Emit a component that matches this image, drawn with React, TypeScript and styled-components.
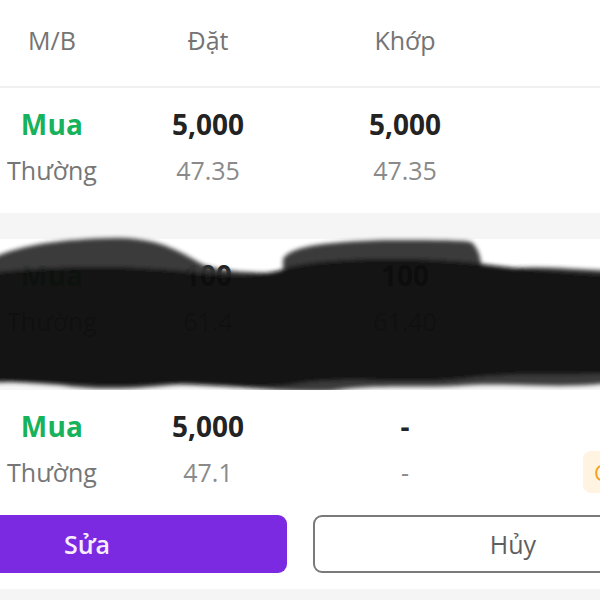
import styled, { createGlobalStyle } from 'styled-components'
import { FC } from 'react'

type TOrder = {
  side: string
  kind: string
  qty: string
  price: string
  matchQty: string
  matchPrice: string
  status?: string
  actions?: boolean
  hidden?: boolean
}

const orders: TOrder[] = [
  { side: 'Mua', kind: 'Thường', qty: '5,000', price: '47.35', matchQty: '5,000', matchPrice: '47.35' },
  { side: 'Mua', kind: 'Thường', qty: '100', price: '61.4', matchQty: '100', matchPrice: '61.40', hidden: true },
  { side: 'Mua', kind: 'Thường', qty: '5,000', price: '47.1', matchQty: '-', matchPrice: '-', status: 'Chờ khớp', actions: true },
]

const GlobalStyle = createGlobalStyle`
  body {
    margin: 0;
    background: #f5f5f5;
    font-family: "Open Sans", "Noto Sans", sans-serif;
    overflow: hidden;
  }
`

// redaction marker drawn over the second order
const Scribble: FC = () => (
  <ScribbleSvg viewBox="0 0 600 164" width="600" height="164">
    <defs>
      <filter id="soft" x="-5%" y="-20%" width="110%" height="140%">
        <feGaussianBlur stdDeviation="2.2" />
      </filter>
    </defs>
    <g filter="url(#soft)">
      <path
        d="M-10 26 C20 12 60 6 115 5 C150 5 170 12 200 30 C215 38 250 40 283 40 L283 26 C290 14 320 9 383 7 C430 7 462 7 471 9 C480 16 482 30 482 44 C497 32 540 33 610 38 L610 150 C560 156 520 150 470 152 C420 156 380 150 330 158 C280 160 230 152 190 150 C140 156 100 158 60 152 C30 150 10 148 -10 150 Z"
        fill="#363636"
      />
      <path
        d="M-10 40 C40 34 120 30 200 40 C240 44 270 42 290 34 C330 24 420 24 476 30 C510 36 560 38 610 42 L610 140 C560 144 510 138 460 146 C400 152 340 142 290 152 C240 158 190 148 150 152 C100 156 50 148 -10 148 Z"
        fill="#080808"
      />
    </g>
  </ScribbleSvg>
)

const OrderCard: FC<{ order: TOrder }> = ({ order }) => (
  <Card $tight={!!order.actions}>
    <Grid>
      <Side>{order.side}</Side>
      <Qty>{order.qty}</Qty>
      <Qty>{order.matchQty}</Qty>
      <span />
      <Kind>{order.kind}</Kind>
      <Price>{order.price}</Price>
      <Price>{order.matchPrice}</Price>
      <StatusCell>{order.status && <Badge>{order.status}</Badge>}</StatusCell>
    </Grid>
    {order.actions && (
      <Actions>
        <EditButton>Sửa</EditButton>
        <CancelButton>Hủy</CancelButton>
      </Actions>
    )}
    {order.hidden && <Scribble />}
  </Card>
)

export default function App() {
  return (
    <Page>
      <GlobalStyle />
      <Header>
        <HeadCell>M/B</HeadCell>
        <HeadCell>Đặt</HeadCell>
        <HeadCell>Khớp</HeadCell>
        <span />
      </Header>
      <List>
        {orders.map((o, i) => (
          <OrderCard key={i} order={o} />
        ))}
      </List>
    </Page>
  )
}

const Page = styled.div`
  width: 600px;
  height: 600px;
  overflow: hidden;
  background: #f5f5f5;
`
const Header = styled.div`
  display: grid;
  grid-template-columns: 104px 208px 186px 240px;
  align-items: center;
  height: 88px;
  padding-bottom: 6px;
  box-sizing: border-box;
  background: #fff;
  border-bottom: 2px solid #f0f0f0;
`
const HeadCell = styled.span`
  text-align: center;
  font-size: 25px;
  color: #747474;
`
const List = styled.div`
  display: flex;
  flex-direction: column;
  gap: 26px;
`
const Card = styled.div<{ $tight: boolean }>`
  position: relative;
  background: #fff;
  padding: 17px 0 ${(p) => (p.$tight ? 16 : 26)}px;
`
const Grid = styled.div`
  display: grid;
  grid-template-columns: 104px 208px 186px 240px;
  grid-template-rows: 38px 34px;
  row-gap: 10px;
  align-items: center;
`
const Side = styled.span`
  text-align: center;
  font-size: 28px;
  font-weight: 700;
  color: #17b25c;
  letter-spacing: 0.3px;
`
const Qty = styled.span`
  text-align: center;
  font-size: 28px;
  font-weight: 700;
  color: #232323;
`
const Kind = styled.span`
  text-align: center;
  font-size: 25px;
  color: #767676;
`
const Price = styled.span`
  text-align: center;
  font-size: 25px;
  color: #8a8a8a;
`
const StatusCell = styled.div`
  display: flex;
  padding-left: 85px;
`
const Badge = styled.span`
  height: 42px;
  margin: -4px 0;
  padding: 0 11px;
  display: flex;
  align-items: center;
  border-radius: 8px;
  background: #fff4e2;
  color: #f3a21c;
  font-size: 22px;
  white-space: nowrap;
`
const Actions = styled.div`
  display: grid;
  grid-template-columns: 1fr 1fr;
  gap: 26px;
  width: 826px;
  margin: 26px 0 0 -113px;
`
const EditButton = styled.button`
  height: 58px;
  border: none;
  border-radius: 9px;
  background: #7b2ae2;
  color: #f6eeff;
  font-family: inherit;
  font-size: 25px;
  font-weight: 600;
`
const CancelButton = styled.button`
  height: 58px;
  border: 2px solid #7a7a7a;
  border-radius: 9px;
  background: #fff;
  color: #5f5f5f;
  font-family: inherit;
  font-size: 25px;
  font-weight: 500;
`
const ScribbleSvg = styled.svg`
  position: absolute;
  top: -6px;
  left: 0;
  opacity: 0.97;
  pointer-events: none;
`
